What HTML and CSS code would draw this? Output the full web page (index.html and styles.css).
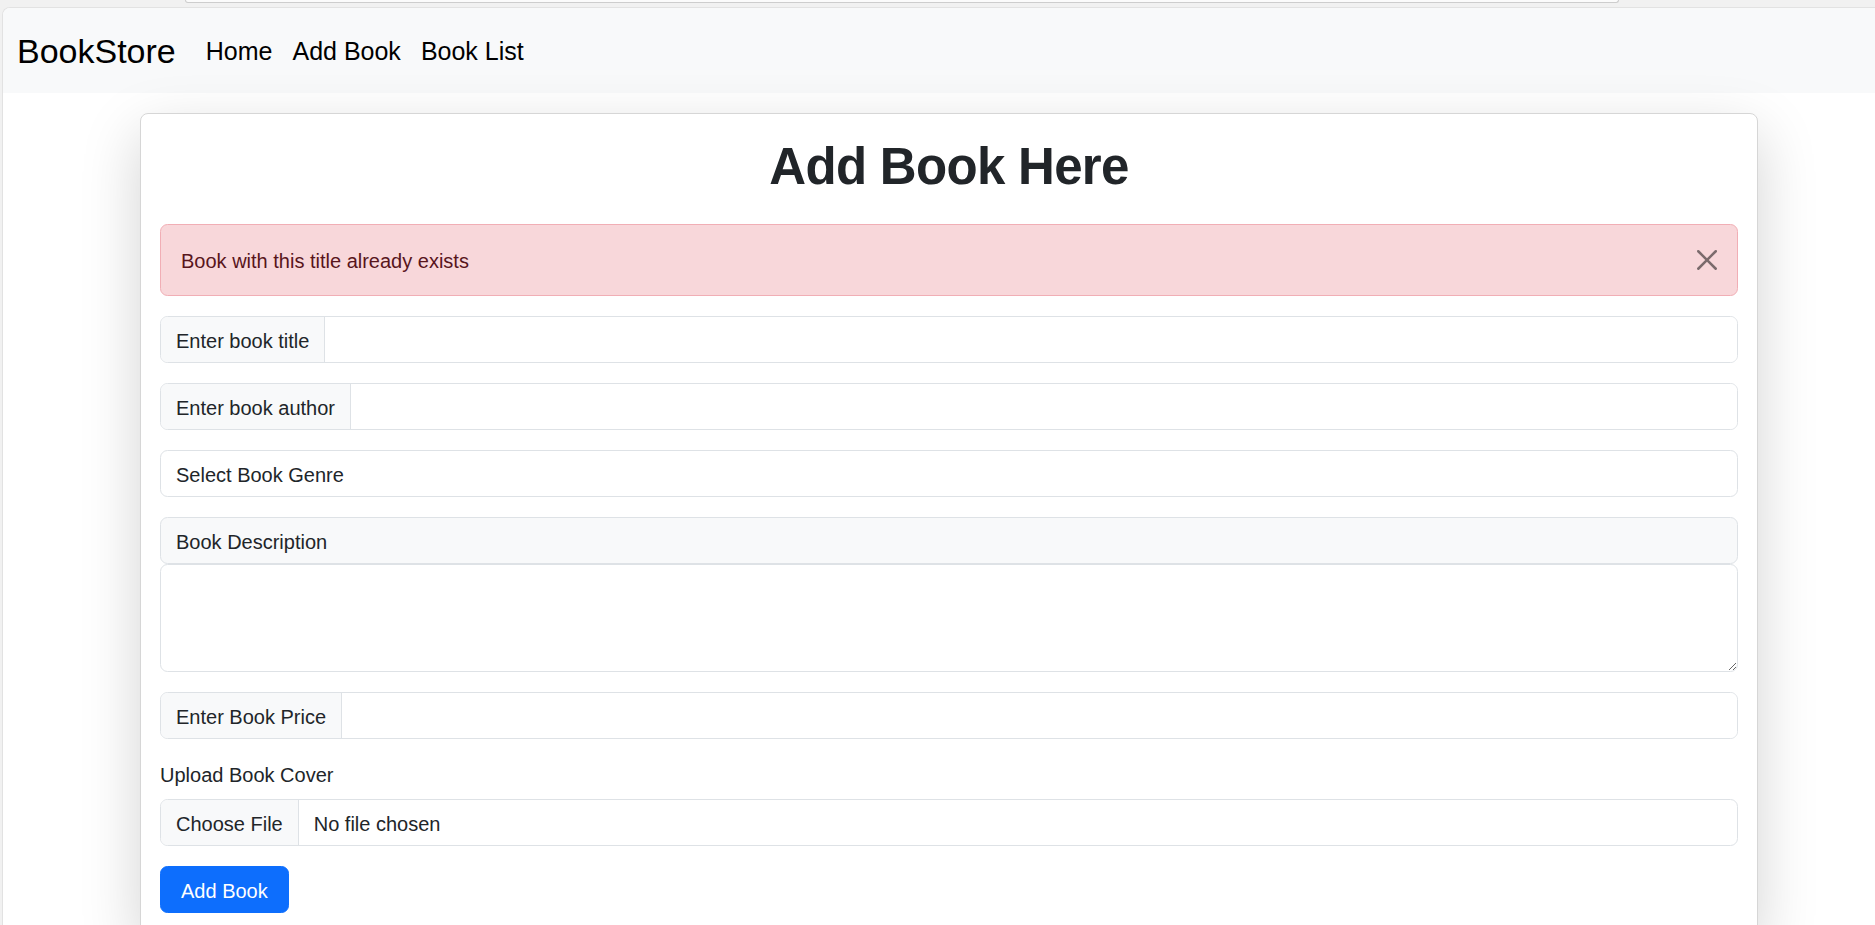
FILE: index.html
```html
<!DOCTYPE html>
<html lang="en">
<head>
<meta charset="utf-8">
<title>BookStore - Add Book</title>
<link rel="stylesheet" href="styles.css">
</head>
<body>
<div class="chrome"><div class="omnibox"></div></div>
<div class="window">
  <nav class="navbar">
    <a class="brand" href="#">BookStore</a>
    <div class="nav">
      <a class="nav-link" href="#">Home</a>
      <a class="nav-link" href="#">Add Book</a>
      <a class="nav-link" href="#">Book List</a>
    </div>
  </nav>
  <main class="main">
    <div class="card">
      <h1 class="title">Add Book Here</h1>
      <div class="alert">
        <span class="alert-text">Book with this title already exists</span>
        <button class="close" type="button" aria-label="Close">
          <svg viewBox="0 0 16 16" width="20" height="20"><path d="M.293.293a1 1 0 0 1 1.414 0L8 6.586 14.293.293a1 1 0 1 1 1.414 1.414L9.414 8l6.293 6.293a1 1 0 0 1-1.414 1.414L8 9.414l-6.293 6.293a1 1 0 0 1-1.414-1.414L6.586 8 .293 1.707a1 1 0 0 1 0-1.414z"/></svg>
        </button>
      </div>
      <div class="group"><span class="addon">Enter book title</span><input class="input" type="text"></div>
      <div class="group"><span class="addon">Enter book author</span><input class="input" type="text"></div>
      <select class="select"><option>Select Book Genre</option></select>
      <div class="desc-head">Book Description</div>
      <textarea class="desc"></textarea>
      <div class="group"><span class="addon">Enter Book Price</span><input class="input" type="text"></div>
      <label class="label">Upload Book Cover</label>
      <div class="group"><span class="addon">Choose File</span><span class="file-name">No file chosen</span></div>
      <button class="btn" type="button">Add Book</button>
    </div>
  </main>
</div>
</body>
</html>
```
FILE: styles.css
```css
html, body {
  margin: 0;
  height: 100%;
}
body {
  background: #f1f1f1;
  font-family: "Liberation Sans", Arial, sans-serif;
  font-size: 20px;
  line-height: 1.5;
  color: #212529;
  overflow: hidden;
  display: flex;
  flex-direction: column;
}
.chrome {
  height: 7px;
  flex: none;
}
.omnibox {
  margin-left: 185px;
  width: 1432px;
  height: 2px;
  background: #fbfbfb;
  border: 1px solid #cdcdcd;
  border-top: none;
  border-radius: 0 0 6px 6px;
}
.window {
  flex: 1;
  margin-left: 2px;
  background: #fff;
  border-top: 1px solid #e2e2e2;
  border-left: 1px solid #e2e2e2;
  border-top-left-radius: 8px;
  overflow: hidden;
}
.navbar {
  height: 85px;
  box-sizing: border-box;
  background: #f8f9fa;
  display: flex;
  align-items: center;
  padding: 2px 14px 0;
}
.brand {
  font-size: 34px;
  color: #000;
  margin-right: 20px;
  text-decoration: none;
}
.nav {
  display: flex;
}
.nav-link {
  font-size: 25px;
  color: #000;
  padding: 0 10px;
  text-decoration: none;
}
.main {
  padding: 20px 0 0 137px;
}
.card {
  width: 1618px;
  box-sizing: border-box;
  border: 1px solid #d6d6d6;
  border-radius: 8px;
  background: #fff;
  box-shadow: 0 20px 60px rgba(0, 0, 0, 0.175);
  padding: 20px 19px;
}
.title {
  margin: 3px 0 27px;
  font-size: 51px;
  line-height: 60px;
  font-weight: 700;
  letter-spacing: -0.7px;
  text-align: center;
  color: #212529;
}
.alert {
  display: flex;
  align-items: center;
  justify-content: space-between;
  height: 72px;
  box-sizing: border-box;
  padding: 0 20px;
  background: #f8d7da;
  border: 1px solid #f1aeb5;
  border-radius: 7.5px;
  color: #58151c;
  margin-bottom: 20px;
}
.alert-text {
  padding-top: 2px;
}
.close {
  background: none;
  border: 0;
  padding: 0;
  width: 20px;
  height: 20px;
  display: flex;
}
.close svg {
  fill: #000;
  opacity: 0.5;
}
.group {
  display: flex;
  height: 47px;
  box-sizing: border-box;
  border: 1px solid #dee2e6;
  border-radius: 7.5px;
  overflow: hidden;
  margin-bottom: 20px;
  background: #fff;
}
.addon {
  background: #f8f9fa;
  border-right: 1px solid #dee2e6;
  padding: 2px 15px 0;
  display: flex;
  align-items: center;
  white-space: nowrap;
}
.input {
  flex: 1;
  min-width: 0;
  border: 0;
  outline: 0;
  font: inherit;
  padding: 0 15px;
  background: #fff;
}
.file-name {
  display: flex;
  align-items: center;
  padding: 2px 15px 0;
}
.select {
  display: block;
  width: 100%;
  height: 47px;
  box-sizing: border-box;
  border: 1px solid #dee2e6;
  border-radius: 7.5px;
  appearance: none;
  -webkit-appearance: none;
  font: inherit;
  color: #212529;
  padding: 2px 15px 0;
  background: #fff;
  margin: 0 0 20px;
  outline: 0;
}
.desc-head {
  height: 47px;
  box-sizing: border-box;
  border: 1px solid #dee2e6;
  border-radius: 7.5px;
  background: #f8f9fa;
  padding: 2px 15px 0;
  display: flex;
  align-items: center;
}
.desc {
  display: block;
  width: 100%;
  height: 108px;
  box-sizing: border-box;
  border: 1px solid #dee2e6;
  border-radius: 7.5px;
  font: inherit;
  padding: 7.5px 15px;
  margin: 0 0 20px;
  resize: vertical;
  outline: 0;
}
.label {
  display: block;
  margin-bottom: 10px;
  padding-top: 2px;
  line-height: 28px;
}
.btn {
  background: #0d6efd;
  color: #fff;
  border: 1px solid #0d6efd;
  border-radius: 7.5px;
  font: inherit;
  height: 47px;
  padding: 2px 20px 0;
}
```
